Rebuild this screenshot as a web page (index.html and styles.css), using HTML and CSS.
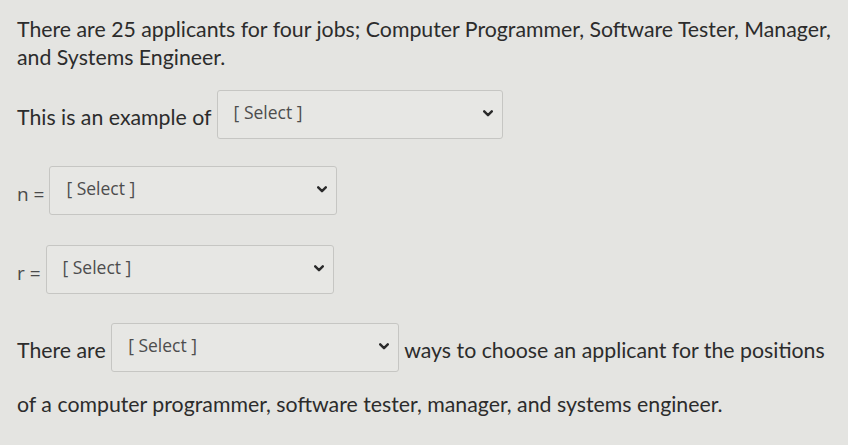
FILE: index.html
```html
<!DOCTYPE html>
<html lang="en">
<head>
<meta charset="utf-8">
<title>Quiz question</title>
<link rel="stylesheet" href="styles.css">
</head>
<body>
<div class="question">
  <p class="intro">There are 25 applicants for four jobs; Computer Programmer, Software Tester, Manager, and Systems Engineer.</p>
  <p class="line">This is an example of <span class="select w286"><span class="select-text">[ Select ]</span><svg class="chev" viewBox="0 0 10 7" width="10" height="7"><path d="M1.2 1.3 L5 5.2 L8.8 1.3" fill="none" stroke="#2a2a2a" stroke-width="2.4" stroke-linecap="round" stroke-linejoin="round"/></svg></span></p>
  <p class="line var">n = <span class="select"><span class="select-text">[ Select ]</span><svg class="chev" viewBox="0 0 10 7" width="10" height="7"><path d="M1.2 1.3 L5 5.2 L8.8 1.3" fill="none" stroke="#2a2a2a" stroke-width="2.4" stroke-linecap="round" stroke-linejoin="round"/></svg></span></p>
  <p class="line var var-r">r = <span class="select"><span class="select-text">[ Select ]</span><svg class="chev" viewBox="0 0 10 7" width="10" height="7"><path d="M1.2 1.3 L5 5.2 L8.8 1.3" fill="none" stroke="#2a2a2a" stroke-width="2.4" stroke-linecap="round" stroke-linejoin="round"/></svg></span></p>
  <p class="line last">There are <span class="select tight"><span class="select-text">[ Select ]</span><svg class="chev" viewBox="0 0 10 7" width="10" height="7"><path d="M1.2 1.3 L5 5.2 L8.8 1.3" fill="none" stroke="#2a2a2a" stroke-width="2.4" stroke-linecap="round" stroke-linejoin="round"/></svg></span> ways to choose an applicant for the positions of a computer programmer, software tester, manager, and systems engineer.</p>
</div>
</body>
</html>
```
FILE: styles.css
```css
html, body {
  margin: 0;
  padding: 0;
}

body {
  background: #e4e4e1;
  color: #2c2c2c;
  font-family: Lato, "Liberation Sans", sans-serif;
  font-size: 21.3px;
  line-height: 28px;
}

.question {
  padding: 15px 17px 0 17px;
}

.question p {
  margin: 0;
}

.intro {
  margin: 0;
  max-width: 818px;
}

.line {
  margin-top: 19px !important;
}

.var {
  margin-top: 27px !important;
  font-family: "Open Sans", "Liberation Sans", sans-serif;
  font-size: 19px;
  color: #4a4a4a;
}

.var-r {
  margin-top: 30px !important;
}

.last {
  margin-top: 29px !important;
}

.select {
  display: inline-flex;
  align-items: flex-start;
  justify-content: space-between;
  box-sizing: border-box;
  width: 288px;
  height: 49px;
  padding: 10px 9px 0 16px;
  border: 1px solid #c6c6c3;
  border-radius: 3px;
  background: #e7e7e4;
  vertical-align: 6px;
  font-family: "Open Sans", "Liberation Sans", sans-serif;
  font-size: 17.5px;
  line-height: 22px;
  color: #4d4d4d;
}

.w286 {
  width: 286px;
}

.tight {
  margin-bottom: 18px;
}

.select-text {
  display: block;
}

.chev {
  display: block;
  margin-top: 9px;
}
```
